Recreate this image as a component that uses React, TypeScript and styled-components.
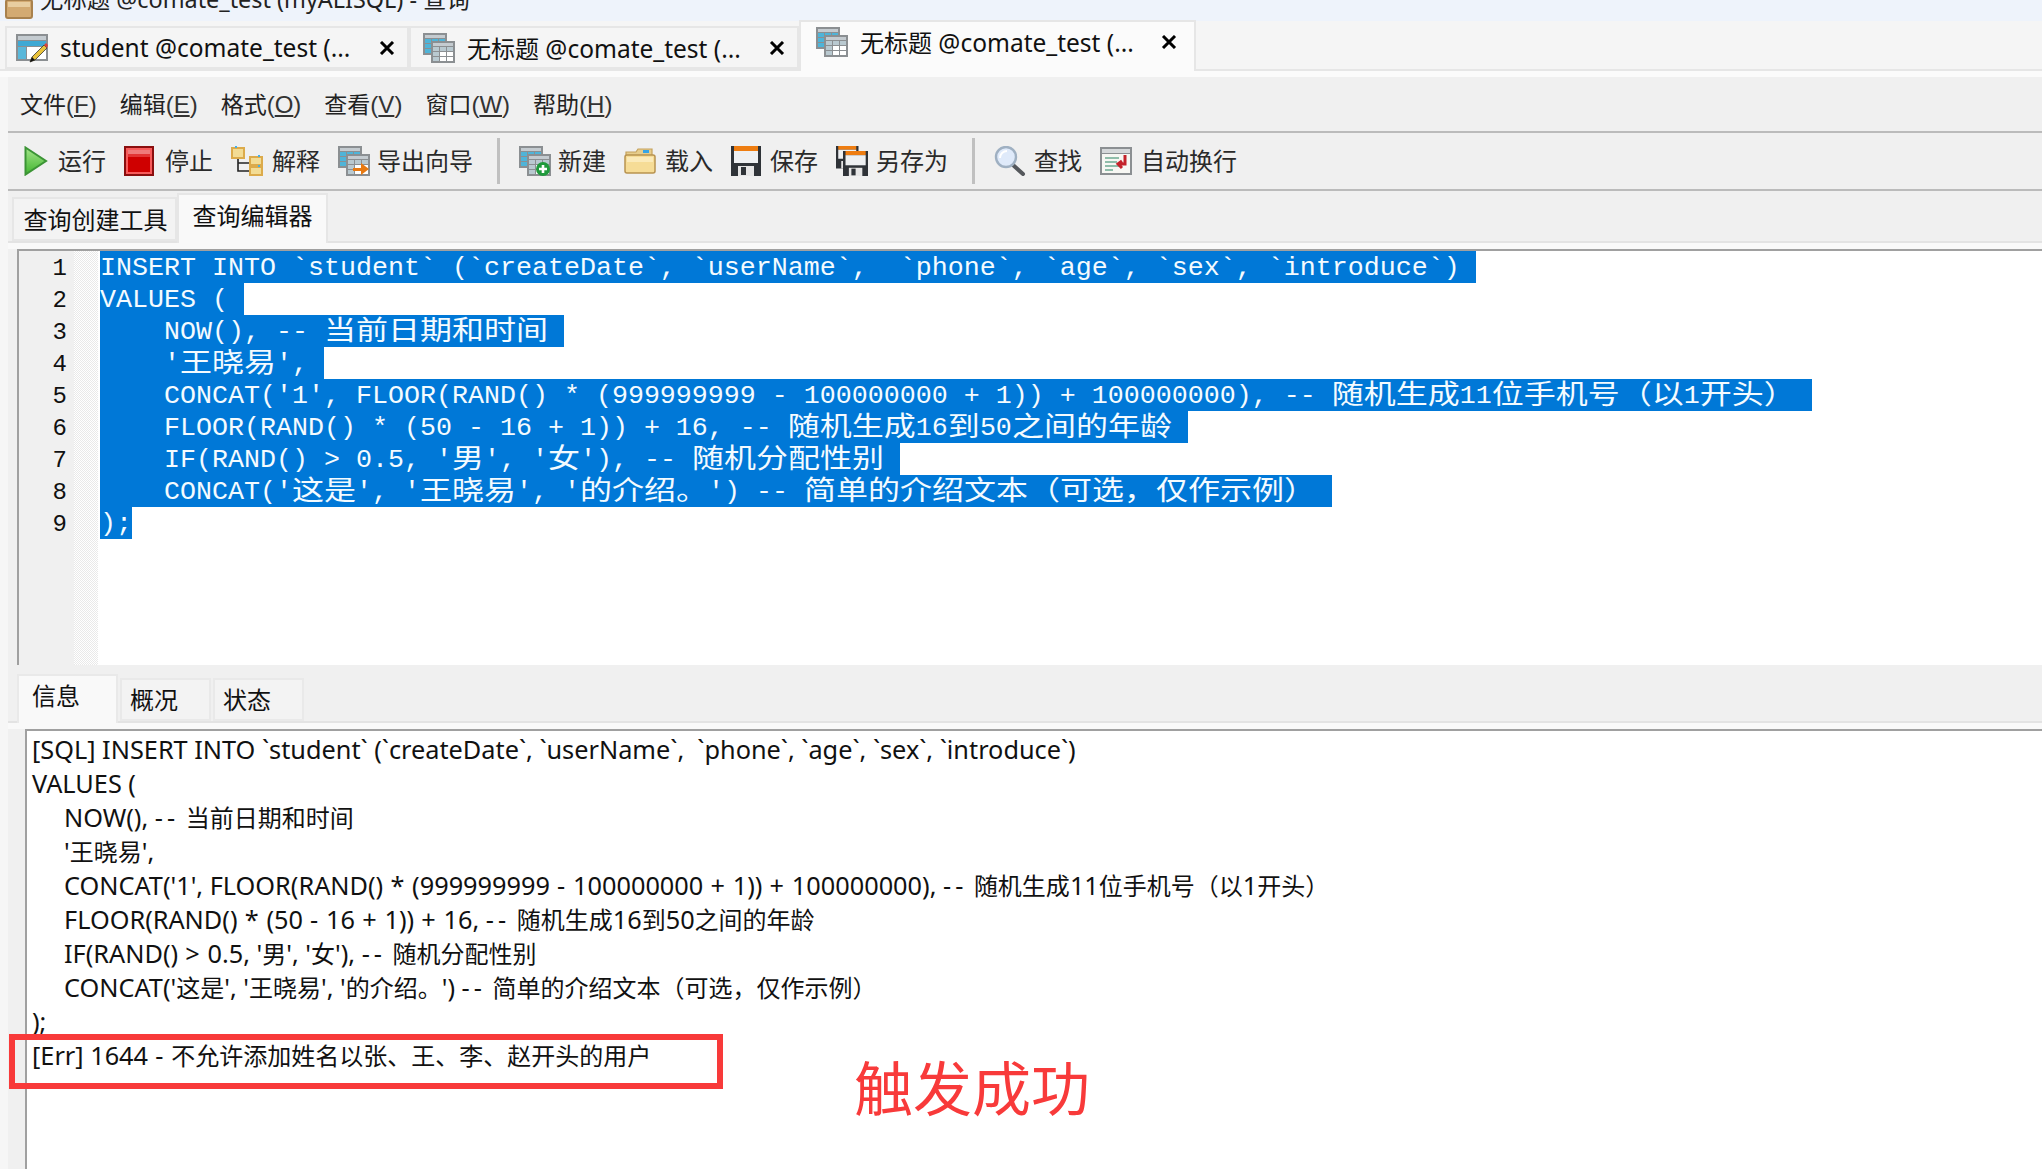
import React from 'react';
import styled, { createGlobalStyle } from 'styled-components';

const GlobalStyle = createGlobalStyle`
  html, body {
    margin: 0;
    padding: 0;
    background: #fff;
  }
`;

const UI_FONT = `"Noto Sans", "Noto Sans CJK SC", sans-serif`;
const CODE_FONT = `"Liberation Mono", "Noto Sans CJK SC", monospace`;
const CJK_FONT = `"Noto Sans CJK SC", sans-serif`;
const RED = '#f83a3a';

const Page = styled.div`
  position: relative;
  width: 2042px;
  height: 1169px;
  overflow: hidden;
  display: flex;
  flex-direction: column;
  background: #f6f6f6;
  font-family: ${UI_FONT};
  color: #111;
`;

const TitleBar = styled.div`
  height: 21px;
  flex: none;
  background: #eef3fb;
  overflow: hidden;
  display: flex;
  align-items: flex-end;
  gap: 6px;
  padding-left: 4px;
`;

const TitleText = styled.span`
  font-size: 23.4px;
  line-height: 32px;
  margin-bottom: 6px;
  white-space: pre;
  color: #222;
`;

const TabRow = styled.div`
  height: 50px;
  flex: none;
  display: flex;
  align-items: flex-end;
  padding-left: 5px;
  background: #f5f5f5;
  border-bottom: 2px solid #e6e6e6;
  box-sizing: border-box;
`;

const DocTab = styled.div<{ $width: number; $inset: number; $active?: boolean }>`
  width: ${p => p.$width}px;
  height: ${p => (p.$active ? 51 : 43)}px;
  margin-bottom: ${p => (p.$active ? -2 : 0)}px;
  padding: ${p => (p.$active ? `0 17px 10px ${p.$inset}px` : `0 12px 0 ${p.$inset}px`)};
  box-sizing: border-box;
  display: flex;
  align-items: center;
  gap: 12px;
  background: ${p => (p.$active ? '#fbfbfb' : '#f5f5f5')};
  border: 2px solid #e6e6e6;
  border-bottom: ${p => (p.$active ? 'none' : '2px solid #e6e6e6')};
  position: relative;
  z-index: ${p => (p.$active ? 1 : 0)};
`;

const DocTabLabel = styled.span`
  font-size: 24.5px;
  white-space: pre;
  flex: 1;
`;

const DocTabCjk = styled.span`
  font-size: 24px;
`;

const TabGap = styled.div`
  height: 6px;
  flex: none;
  background: #fbfbfb;
`;

const Main = styled.div`
  flex: 1;
  min-height: 0;
  margin-left: 8px;
  display: flex;
  flex-direction: column;
  background: #f0f0f0;
`;

const MenuBar = styled.div`
  height: 56px;
  flex: none;
  box-sizing: border-box;
  display: flex;
  align-items: center;
  gap: 23px;
  padding: 0 0 2px 12px;
  border-bottom: 2px solid #bbb;
`;

const MenuItem = styled.span`
  font-family: ${CJK_FONT};
  font-size: 23px;
  color: #222;
  white-space: pre;
`;

const MenuKey = styled.span`
  font-size: 24px;
  font-family: "Liberation Sans", sans-serif;
  color: #333;

  u {
    text-underline-offset: 2px;
  }
`;

const Toolbar = styled.div`
  height: 58px;
  flex: none;
  box-sizing: border-box;
  display: flex;
  align-items: center;
  gap: 18px;
  padding-left: 16px;
  border-bottom: 2px solid #bbb;
`;

const ToolButton = styled.div<{ $gap: number }>`
  display: flex;
  align-items: center;
  gap: ${p => p.$gap}px;
`;

const ToolLabel = styled.span`
  font-family: ${CJK_FONT};
  font-size: 24px;
  line-height: 34px;
  color: #2a2a2a;
  white-space: pre;
  margin-top: -3px;
`;

const ToolSeparator = styled.div`
  width: 3px;
  height: 46px;
  background: #c0c0c0;
  margin: 0 1px 0 6px;
`;

const SubTabs = styled.div`
  height: 52px;
  flex: none;
  box-sizing: border-box;
  display: flex;
  align-items: flex-end;
  padding-left: 4px;
  border-bottom: 2px solid #e3e3e3;
`;

const SubTab = styled.div<{ $width: number; $active?: boolean }>`
  width: ${p => p.$width}px;
  height: ${p => (p.$active ? 50 : 44)}px;
  margin-bottom: ${p => (p.$active ? -2 : 0)}px;
  box-sizing: border-box;
  display: flex;
  justify-content: center;
  align-items: ${p => (p.$active ? 'flex-start' : 'center')};
  padding: ${p => (p.$active ? '2px 0 0 0' : '0 0 2px 2px')};
  font-family: ${CJK_FONT};
  font-size: 24px;
  background: ${p => (p.$active ? '#f9f9f9' : '#f3f3f3')};
  border: 2px solid #e6e6e6;
  border-bottom: ${p => (p.$active ? 'none' : '2px solid #e6e6e6')};
  position: relative;
`;

const PaneGap = styled.div`
  height: 6px;
  flex: none;
  background: #f9f9f9;
`;

const Editor = styled.div`
  height: 416px;
  flex: none;
  margin-left: 9px;
  box-sizing: border-box;
  display: flex;
  background: #fff;
  border-top: 2px solid #a0a0a0;
  border-left: 2px solid #a0a0a0;
  overflow: hidden;
`;

const Gutter = styled.div`
  width: 55px;
  flex: none;
  background: #f0f0f0;
`;

const LineNumber = styled.div`
  height: 32px;
  line-height: 35px;
  padding-right: 7px;
  text-align: right;
  font-family: ${CODE_FONT};
  font-size: 24px;
  color: #111;
`;

const FoldMargin = styled.div`
  width: 24px;
  flex: none;
  background: repeating-conic-gradient(#e9e9e9 0 25%, #fff 0 50%) 0 0 / 2px 2px;
`;

const CodeArea = styled.div`
  flex: 1;
  padding-left: 2px;
`;

const CodeLine = styled.div`
  height: 32px;
`;

const Selected = styled.span`
  display: inline-block;
  height: 32px;
  line-height: 34px;
  background: #0078d7;
  color: #f4fbff;
  font-family: ${CODE_FONT};
  font-size: 26.67px;
  white-space: pre;
  vertical-align: top;
`;

const CodeCjk = styled.span`
  display: inline-block;
  font-family: ${CJK_FONT};
  font-size: 32px;
  line-height: 32px;
  height: 32px;
  vertical-align: top;
  transform: translateY(-3px) scaleY(0.84);
`;

const ResultTabs = styled.div`
  height: 58px;
  flex: none;
  box-sizing: border-box;
  display: flex;
  align-items: flex-end;
  gap: 2px;
  padding-left: 9px;
  border-bottom: 2px solid #e3e3e3;
`;

const ResultTab = styled.div<{ $active?: boolean }>`
  width: ${p => (p.$active ? 101 : 91)}px;
  height: ${p => (p.$active ? 49 : 43)}px;
  margin-bottom: ${p => (p.$active ? -2 : 0)}px;
  box-sizing: border-box;
  display: flex;
  justify-content: flex-start;
  align-items: ${p => (p.$active ? 'flex-start' : 'center')};
  padding: ${p => (p.$active ? '1px 0 0 13px' : '0 0 3px 8px')};
  font-family: ${CJK_FONT};
  font-size: 24px;
  background: ${p => (p.$active ? '#f9f9f9' : '#f3f3f3')};
  border: 2px solid #e9e9e9;
  border-bottom: ${p => (p.$active ? 'none' : '2px solid #e9e9e9')};
  position: relative;
`;

const Results = styled.div`
  flex: 1;
  min-height: 0;
  margin-left: 17px;
  padding: 1px 0 0 5px;
  background: #fff;
  border-top: 2px solid #a0a0a0;
  border-left: 2px solid #a0a0a0;
  overflow: hidden;
`;

const ResultLine = styled.div<{ $indent?: boolean }>`
  height: 34px;
  line-height: 34px;
  padding-left: ${p => (p.$indent ? 32 : 0)}px;
  font-size: 25.3px;
  white-space: pre;
  color: #111;
`;

const ResultCjk = styled.span`
  font-family: ${CJK_FONT};
  font-size: 24px;
`;

const ResultOp = styled.span<{ $spacing: number }>`
  letter-spacing: ${p => p.$spacing}px;
`;

const ErrorFrame = styled.div`
  position: absolute;
  left: 9px;
  top: 1034px;
  width: 714px;
  height: 55px;
  box-sizing: border-box;
  border: 6px solid ${RED};
`;

const Annotation = styled.div`
  position: absolute;
  left: 854px;
  top: 1044px;
  font-family: ${CJK_FONT};
  font-size: 59px;
  line-height: 84px;
  color: ${RED};
  white-space: pre;
`;

// icons

const Grid = ({ x, y, light }: { x: number; y: number; light?: boolean }) => {
  const cols = [0, 1, 2];
  const rows = [0, 1, 2];
  return (
    <g>
      <rect x={x} y={y} width="24" height="22" fill="#8b8f92" />
      <rect x={x + 2} y={y + 2} width="20" height="3" fill="#c4cbd0" />
      {rows.map(r =>
        cols.map(c => (
          <rect
            key={`${r}-${c}`}
            x={x + 2 + c * 7}
            y={y + 6 + r * 5}
            width="6"
            height="4"
            fill={light ? (r === 0 || c === 0 ? '#b9c9d0' : '#fff') : r === 0 || c === 0 ? '#4fb4d8' : '#b8dbe8'}
          />
        ))
      )}
    </g>
  );
};

const TableStack = ({ children }: { children?: React.ReactNode }) => (
  <svg width="32" height="30" viewBox="0 0 32 30">
    <Grid x={0} y={0} />
    <Grid x={8} y={8} light />
    {children}
  </svg>
);

const EditTableIcon = () => (
  <svg width="32" height="30" viewBox="0 0 32 30">
    <rect x="0" y="1" width="32" height="27" fill="#8b8f92" />
    <rect x="2" y="3" width="28" height="4" fill="#c4cbd0" />
    <rect x="2" y="8" width="28" height="5" fill="#3fa9d4" />
    <rect x="2" y="14" width="8" height="12" fill="#5ab8da" />
    <rect x="11" y="14" width="19" height="12" fill="#fff" />
    <path d="M14 29 L16 24 L28 12 L31 15 L19 27 Z" fill="#e9c23a" stroke="#333" strokeWidth="0.8" />
    <path d="M28 12 L30 10 L32 12 L31 15 Z" fill="#d8423c" />
    <path d="M14 29 L16 24 L19 27 Z" fill="#111" />
  </svg>
);

const PlayIcon = () => (
  <svg width="24" height="30" viewBox="0 0 24 30">
    <defs>
      <linearGradient id="playFill" x1="0" y1="0" x2="0" y2="1">
        <stop offset="0" stopColor="#a4e58a" />
        <stop offset="1" stopColor="#41b52f" />
      </linearGradient>
    </defs>
    <path d="M1.5 1.5 L22 15 L1.5 28.5 Z" fill="url(#playFill)" stroke="#3b9435" strokeWidth="2" />
  </svg>
);

const StopIcon = () => (
  <svg width="30" height="30" viewBox="0 0 30 30">
    <rect x="0" y="0" width="30" height="30" fill="#8a0e0e" />
    <rect x="2" y="2" width="26" height="26" fill="#f75b5b" />
    <rect x="4" y="4" width="22" height="4" fill="#ef7a7a" />
    <rect x="4" y="8" width="22" height="3" fill="#e23434" />
    <rect x="4" y="11" width="22" height="15" fill="#cf0000" />
  </svg>
);

const ExplainIcon = () => (
  <svg width="32" height="30" viewBox="0 0 32 30">
    <path d="M7 12 V25 H18 M7 17 H18" fill="none" stroke="#222" strokeWidth="1.6" />
    <rect x="1" y="2" width="12" height="10" fill="#f3dc94" stroke="#dcab4b" strokeWidth="2" />
    <rect x="19" y="11" width="12" height="8" fill="#f3dc94" stroke="#dcab4b" strokeWidth="2" />
    <rect x="19" y="21" width="12" height="8" fill="#f3dc94" stroke="#dcab4b" strokeWidth="2" />
    <rect x="4" y="0" width="2" height="2" fill="#45aee8" />
    <rect x="27" y="9" width="2" height="2" fill="#45aee8" />
    <rect x="27" y="19" width="2" height="2" fill="#45aee8" />
  </svg>
);

const FolderIcon = () => (
  <svg width="32" height="26" viewBox="0 0 32 26">
    <path d="M2 4 H12 L14 1 H28 V8 H2 Z" fill="#e7cd8c" stroke="#c5a25c" strokeWidth="1.2" />
    <rect x="19" y="2" width="6" height="3" fill="#35a4e6" />
    <rect x="1" y="7" width="30" height="18" rx="2" fill="#f6dc96" stroke="#b8924f" strokeWidth="1.5" />
    <rect x="3" y="9" width="26" height="5" fill="#fbeab9" />
  </svg>
);

const Floppy = ({ x, y, s }: { x: number; y: number; s: number }) => (
  <g transform={`translate(${x} ${y}) scale(${s})`}>
    <rect width="30" height="30" fill="#2f3338" />
    <rect x="3" y="0" width="24" height="5" fill="#ee7d11" />
    <rect x="3" y="5" width="24" height="12" fill="#eef0f2" />
    <rect x="7" y="20" width="16" height="10" fill="#e6e6e6" />
    <rect x="10" y="21" width="5" height="8" fill="#2f3338" />
  </g>
);

const SaveIcon = () => (
  <svg width="30" height="30" viewBox="0 0 30 30">
    <Floppy x={0} y={0} s={1} />
  </svg>
);

const SaveAsIcon = () => (
  <svg width="32" height="30" viewBox="0 0 32 30">
    <Floppy x={0} y={0} s={0.75} />
    <Floppy x={7} y={5} s={0.84} />
  </svg>
);

const SearchIcon = () => (
  <svg width="32" height="30" viewBox="0 0 32 30">
    <path d="M19 19 L29 28" stroke="#55585c" strokeWidth="4" strokeLinecap="round" />
    <circle cx="12" cy="11" r="10" fill="#dfeafa" stroke="#9fb0c2" strokeWidth="2.4" />
    <path d="M6 12 A7 7 0 0 1 13 5" fill="none" stroke="#fff" strokeWidth="2" />
  </svg>
);

const WrapIcon = () => (
  <svg width="32" height="28" viewBox="0 0 32 28">
    <rect x="0" y="0" width="32" height="28" fill="#8b8f92" />
    <rect x="2" y="2" width="28" height="4" fill="#d5d8da" />
    <rect x="2" y="7" width="28" height="19" fill="#f7f7f3" />
    <path d="M5 11 H19 M5 15 H17 M5 19 H19 M5 23 H13" stroke="#8fbdaa" strokeWidth="2" />
    <path d="M25 8 V17 H19 M22 14 L18 17 L22 21" fill="none" stroke="#c4222a" strokeWidth="3" />
  </svg>
);

const BoxIcon = () => (
  <svg width="30" height="21" viewBox="0 0 30 21">
    <rect x="2" y="0" width="26" height="18" rx="2" fill="#d3aa72" stroke="#a8814e" strokeWidth="2" />
    <rect x="4" y="2" width="22" height="5" fill="#e8cda0" />
  </svg>
);

const CloseIcon = () => (
  <svg width="16" height="14" viewBox="0 0 16 14">
    <path d="M2 1 L14 13 M14 1 L2 13" stroke="#000" strokeWidth="3" />
  </svg>
);

// data

const MENU = [
  ['文件', 'F'],
  ['编辑', 'E'],
  ['格式', 'O'],
  ['查看', 'V'],
  ['窗口', 'W'],
  ['帮助', 'H'],
];

const CODE = [
  'INSERT INTO `student` (`createDate`, `userName`,  `phone`, `age`, `sex`, `introduce`) ',
  'VALUES ( ',
  '    NOW(), -- 当前日期和时间 ',
  "    '王晓易', ",
  "    CONCAT('1', FLOOR(RAND() * (999999999 - 100000000 + 1)) + 100000000), -- 随机生成11位手机号（以1开头） ",
  '    FLOOR(RAND() * (50 - 16 + 1)) + 16, -- 随机生成16到50之间的年龄 ',
  "    IF(RAND() > 0.5, '男', '女'), -- 随机分配性别 ",
  "    CONCAT('这是', '王晓易', '的介绍。') -- 简单的介绍文本（可选，仅作示例） ",
  ');',
];

const RESULT = [
  '[SQL] INSERT INTO `student` (`createDate`, `userName`,  `phone`, `age`, `sex`, `introduce`)',
  'VALUES (',
  '    NOW(), -- 当前日期和时间',
  "    '王晓易',",
  "    CONCAT('1', FLOOR(RAND() * (999999999 - 100000000 + 1)) + 100000000), -- 随机生成11位手机号（以1开头）",
  '    FLOOR(RAND() * (50 - 16 + 1)) + 16, -- 随机生成16到50之间的年龄',
  "    IF(RAND() > 0.5, '男', '女'), -- 随机分配性别",
  "    CONCAT('这是', '王晓易', '的介绍。') -- 简单的介绍文本（可选，仅作示例）",
  ');',
  '[Err] 1644 - 不允许添加姓名以张、王、李、赵开头的用户',
];

const CJK_RUN = /([\u3000-\u9fff\uff00-\uffef]+)/;
const RESULT_TOKEN = /([\u3000-\u9fff\uff00-\uffef]+| [-+*>] |--)/;

const renderCode = (line: string) =>
  line.split(CJK_RUN).map((part, i) =>
    i % 2 === 1 ? <CodeCjk key={i}>{part}</CodeCjk> : part
  );

const renderResult = (line: string) =>
  line.split(RESULT_TOKEN).map((part, i) => {
    if (i % 2 === 0) return part;
    if (part === '--') return <ResultOp key={i} $spacing={4}>{part}</ResultOp>;
    if (part.startsWith(' ')) return <ResultOp key={i} $spacing={0.6}>{part}</ResultOp>;
    return <ResultCjk key={i}>{part}</ResultCjk>;
  });

export default function App(): JSX.Element {
  return (
    <Page>
      <GlobalStyle />
      <TitleBar>
        <BoxIcon />
        <TitleText>无标题 @comate_test (myALISQL) - 查询</TitleText>
      </TitleBar>

      <TabRow>
        <DocTab $width={404} $inset={9}>
          <EditTableIcon />
          <DocTabLabel>student @comate_test (...</DocTabLabel>
          <CloseIcon />
        </DocTab>
        <DocTab $width={390} $inset={12}>
          <TableStack />
          <DocTabLabel><DocTabCjk>无标题</DocTabCjk> @comate_test (...</DocTabLabel>
          <CloseIcon />
        </DocTab>
        <DocTab $width={397} $active $inset={15}>
          <TableStack />
          <DocTabLabel><DocTabCjk>无标题</DocTabCjk> @comate_test (...</DocTabLabel>
          <CloseIcon />
        </DocTab>
      </TabRow>
      <TabGap />

      <Main>
        <MenuBar>
          {MENU.map(([label, key]) => (
            <MenuItem key={key}>
              {label}
              <MenuKey>(<u>{key}</u>)</MenuKey>
            </MenuItem>
          ))}
        </MenuBar>

        <Toolbar>
          <ToolButton $gap={10}><PlayIcon /><ToolLabel>运行</ToolLabel></ToolButton>
          <ToolButton $gap={11}><StopIcon /><ToolLabel>停止</ToolLabel></ToolButton>
          <ToolButton $gap={9}><ExplainIcon /><ToolLabel>解释</ToolLabel></ToolButton>
          <ToolButton $gap={7}>
            <TableStack>
              <path d="M15 22 H23 V17 L31 23 L23 29 V25 H15 Z" fill="#e87a12" />
            </TableStack>
            <ToolLabel>导出向导</ToolLabel>
          </ToolButton>
          <ToolSeparator />
          <ToolButton $gap={7}>
            <TableStack>
              <circle cx="24" cy="23" r="7" fill="#1f9a3c" />
              <path d="M24 19 V27 M20 23 H28" stroke="#fff" strokeWidth="2.6" />
            </TableStack>
            <ToolLabel>新建</ToolLabel>
          </ToolButton>
          <ToolButton $gap={9}><FolderIcon /><ToolLabel>载入</ToolLabel></ToolButton>
          <ToolButton $gap={9}><SaveIcon /><ToolLabel>保存</ToolLabel></ToolButton>
          <ToolButton $gap={8}><SaveAsIcon /><ToolLabel>另存为</ToolLabel></ToolButton>
          <ToolSeparator />
          <ToolButton $gap={8}><SearchIcon /><ToolLabel>查找</ToolLabel></ToolButton>
          <ToolButton $gap={9}><WrapIcon /><ToolLabel>自动换行</ToolLabel></ToolButton>
        </Toolbar>

        <SubTabs>
          <SubTab $width={165}>查询创建工具</SubTab>
          <SubTab $width={151} $active>查询编辑器</SubTab>
        </SubTabs>
        <PaneGap />

        <Editor>
          <Gutter>
            {CODE.map((_, i) => (
              <LineNumber key={i}>{i + 1}</LineNumber>
            ))}
          </Gutter>
          <FoldMargin />
          <CodeArea>
            {CODE.map((line, i) => (
              <CodeLine key={i}>
                <Selected>{renderCode(line)}</Selected>
              </CodeLine>
            ))}
          </CodeArea>
        </Editor>

        <ResultTabs>
          <ResultTab $active>信息</ResultTab>
          <ResultTab>概况</ResultTab>
          <ResultTab>状态</ResultTab>
        </ResultTabs>
        <PaneGap />

        <Results>
          {RESULT.map((line, i) => (
            <ResultLine key={i} $indent={line.startsWith('    ')}>
              {renderResult(line.trimStart())}
            </ResultLine>
          ))}
        </Results>
      </Main>

      <ErrorFrame />
      <Annotation>触发成功</Annotation>
    </Page>
  );
}
